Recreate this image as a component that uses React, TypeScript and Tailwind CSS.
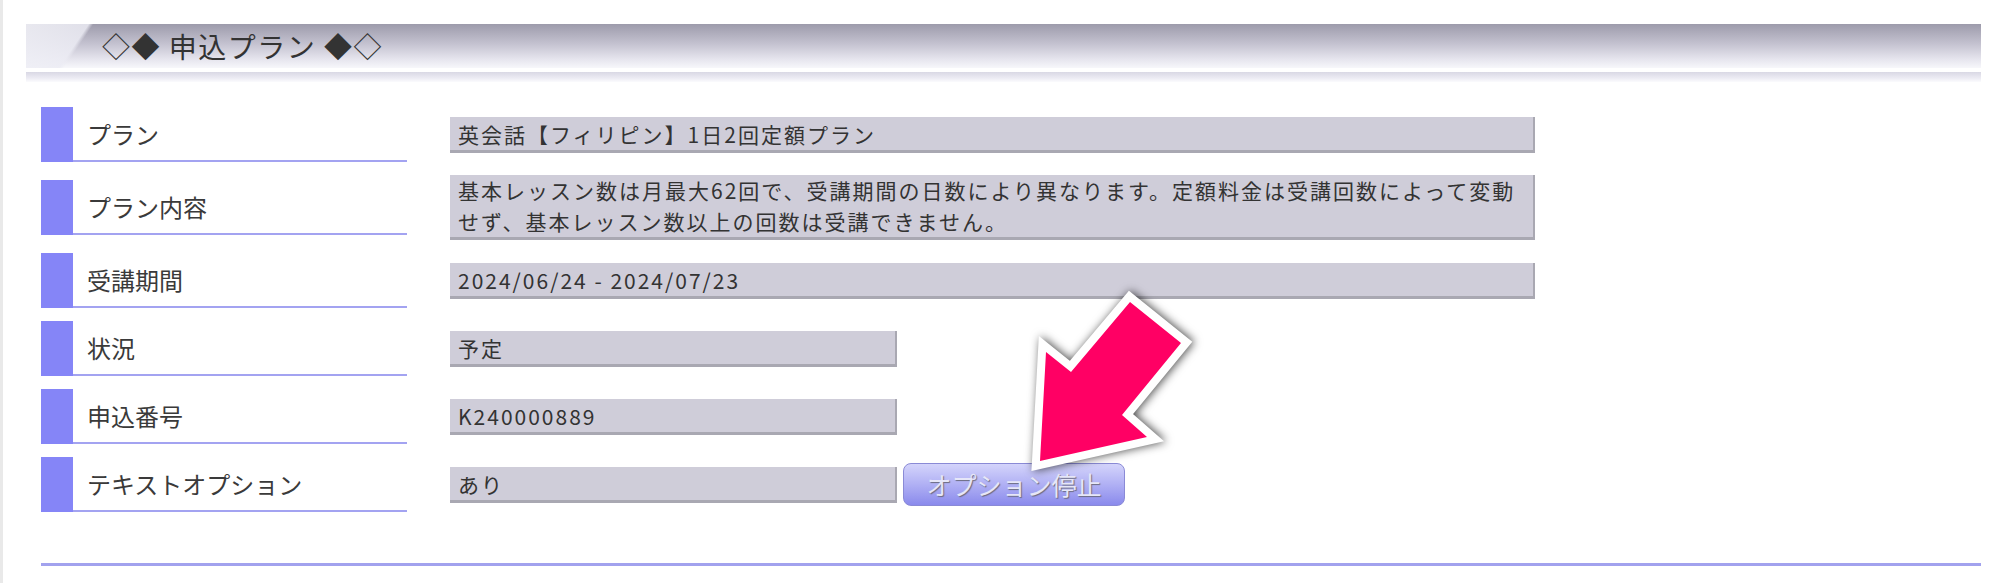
const rows = [
  { label: 'プラン', value: ['英会話【フィリピン】1日2回定額プラン'], wide: true },
  {
    label: 'プラン内容',
    value: [
      '基本レッスン数は月最大62回で、受講期間の日数により異なります。定額料金は受講回数によって変動',
      'せず、基本レッスン数以上の回数は受講できません。',
    ],
    wide: true,
  },
  { label: '受講期間', value: ['2024/06/24 - 2024/07/23'], wide: true },
  { label: '状況', value: ['予定'], wide: false },
  { label: '申込番号', value: ['K240000889'], wide: false },
  { label: 'テキストオプション', value: ['あり'], wide: false, button: true },
];

function PinkArrow() {
  return (
    <svg
      className="absolute left-[1000px] top-[270px] w-[220px] h-[230px] drop-shadow-[2px_0px_5px_rgba(0,0,0,0.7)]"
      viewBox="1000 270 220 230"
    >
      <polygon
        points="1037,461 1043,352 1068,372 1127,302 1178,343 1119,415 1144,437"
        fill="#ff0064"
        stroke="#ffffff"
        strokeWidth="16"
        strokeLinejoin="miter"
        paintOrder="stroke"
      />
    </svg>
  );
}

export default function App() {
  return (
    <div className="relative w-[2000px] h-[583px] overflow-hidden bg-white border-l-[3px] border-[#e9e9e9] font-['Noto_Sans_CJK_JP','Noto_Sans',sans-serif] text-[#333]">
      <div className="pt-[24px] pl-[23px] pr-[19px]">
        <div className="h-[44px] flex items-center pl-[76px] bg-[linear-gradient(124deg,rgba(240,240,246,0.9)_0px,rgba(236,236,244,0.85)_52px,rgba(255,255,255,0)_56px),linear-gradient(to_bottom,#9d9bab,#c4c2d0_45%,#e6e5ee_80%,#f7f7fb)]">
          <span className="text-[28px] leading-none tracking-[1.5px]">◇◆ 申込プラン ◆◇</span>
        </div>
        <div className="mt-[4px] h-[10px] bg-[linear-gradient(to_bottom,#d9d8e4,#ecebf3_60%,#fbfbfd)]" />
      </div>

      <div className="mt-[25px] pl-[38px] flex flex-col gap-[13px]">
        {rows.map((row) => (
          <div key={row.label} className="flex items-center">
            <div className="flex w-[366px] h-[55px] shrink-0">
              <div className="w-[32px] bg-[#8585f7]" />
              <div className="flex-1 flex items-center pl-[14px] border-b-2 border-[#a3a3f1] text-[24px] text-[#3a3a3a]">
                {row.label}
              </div>
            </div>
            <div
              className={`ml-[43px] ${row.wide ? 'w-[1085px]' : 'w-[447px]'} ${row.value.length > 1 ? 'pt-0' : 'pt-[2px]'} bg-[#cfcdd9] border-r-2 border-b-[3px] border-[#a9a8b2] px-[8px] text-[21px] leading-[31px] tracking-[2px] text-[#333]`}
            >
              {row.value.map((line) => (
                <div key={line}>{line}</div>
              ))}
            </div>
            {row.button && (
              <button className="ml-[6px] w-[222px] h-[43px] rounded-[8px] border border-[#8a8ad6] bg-[linear-gradient(to_bottom,#d4d4fb,#b0b0f4_50%,#8a8aec)] text-[25px] text-[#e6e6f8] [text-shadow:1px_1px_1px_#6b6b80] flex items-center justify-center">
                オプション停止
              </button>
            )}
          </div>
        ))}
      </div>

      <div className="mt-[51px] ml-[38px] mr-[19px] h-[3px] bg-[#a2a2ee]" />

      <PinkArrow />
    </div>
  );
}
